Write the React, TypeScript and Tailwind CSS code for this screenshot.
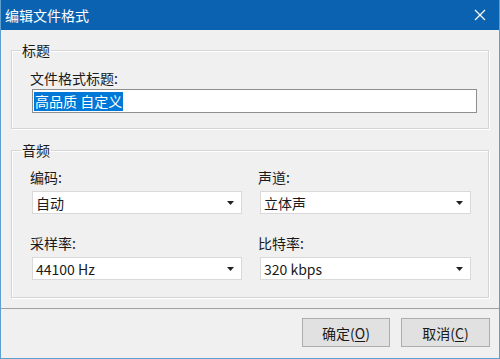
import React from "react";

const font = { fontFamily: '"Noto Sans CJK SC", "Noto Sans", sans-serif' };

function Arrow() {
  return (
    <svg width="7" height="4" viewBox="0 0 7 4" className="shrink-0">
      <polygon points="0,0 7,0 3.5,4" fill="#222" />
    </svg>
  );
}

function Select({ value, w }: { value: string; w: string }) {
  return (
    <div
      className={`${w} h-[23px] bg-white border border-[#d9d9d9] flex items-center justify-between pl-[3px] pr-[7px] text-[14px] leading-none text-[#1a1a1a]`}
    >
      <span style={font}>{value}</span>
      <Arrow />
    </div>
  );
}

export default function App() {
  return (
    <div
      className="w-[500px] h-[359px] bg-[#f0f0f0] border border-[#5d9fcf] border-t-0 flex flex-col overflow-hidden"
      style={font}
    >
      <div className="h-[30px] bg-[#0a62b0] flex items-center justify-between pl-[4px] pr-[13px] shrink-0">
        <span className="text-white text-[14px] leading-none">编辑文件格式</span>
        <svg width="12" height="12" viewBox="0 0 12 12">
          <path d="M1 1L11 11M11 1L1 11" stroke="#fff" strokeWidth="1.3" />
        </svg>
      </div>

      <div className="flex flex-col px-[10px] pt-[10px]">
        <fieldset className="border border-[#d5d5d5] shadow-[inset_1px_1px_0_#fff,1px_1px_0_#fff] w-[478px] h-[89px] pl-[20px] pr-[10px]">
          <legend className="px-[1px] ml-[-11px] text-[14px] leading-[20px] text-[#1a1a1a]">标题</legend>
          <div className="text-[14px] leading-[20px] text-[#1a1a1a] mt-[8px] -ml-[2px]">文件格式标题:</div>
          <div className="mt-[1px] h-[24px] w-[445px] bg-white border border-[#8f8f8f] flex items-center pl-[1px]">
            <span className="bg-[#0078d7] text-white text-[14px] leading-[19px] px-[1px]">高品质 自定义</span>
          </div>
        </fieldset>

        <fieldset className="mt-[11px] border border-[#d5d5d5] shadow-[inset_1px_1px_0_#fff,1px_1px_0_#fff] w-[478px] h-[158px] pl-[20px]">
          <legend className="px-[1px] ml-[-11px] text-[14px] leading-[20px] text-[#1a1a1a]">音频</legend>
          <div className="grid grid-cols-[228px_211px] mt-[7px] gap-y-[19px]">
            <div className="flex flex-col">
              <div className="text-[14px] leading-[20px] text-[#1a1a1a] -ml-[2px]">编码:</div>
              <div className="mt-[4px]"><Select value="自动" w="w-[210px]" /></div>
            </div>
            <div className="flex flex-col">
              <div className="text-[14px] leading-[20px] text-[#1a1a1a] -ml-[2px]">声道:</div>
              <div className="mt-[4px]"><Select value="立体声" w="w-[211px]" /></div>
            </div>
            <div className="flex flex-col">
              <div className="text-[14px] leading-[20px] text-[#1a1a1a] -ml-[2px]">采样率:</div>
              <div className="mt-[4px]"><Select value="44100 Hz" w="w-[210px]" /></div>
            </div>
            <div className="flex flex-col">
              <div className="text-[14px] leading-[20px] text-[#1a1a1a] -ml-[2px]">比特率:</div>
              <div className="mt-[4px]"><Select value="320 kbps" w="w-[211px]" /></div>
            </div>
          </div>
        </fieldset>
      </div>

      <div className="mt-[10px] h-[1px] bg-[#a0a0a0] shrink-0" />
      <div className="flex justify-end gap-[11px] pr-[9px] pt-[9px]">
        <button className="w-[88px] h-[29px] bg-[#e1e1e1] border border-[#adadad] text-[14px] leading-none text-[#1a1a1a] flex items-center justify-center">
          确定(<span className="underline underline-offset-2">O</span>)
        </button>
        <button className="w-[89px] h-[29px] bg-[#e1e1e1] border border-[#adadad] text-[14px] leading-none text-[#1a1a1a] flex items-center justify-center">
          取消(<span className="underline underline-offset-2">C</span>)
        </button>
      </div>
    </div>
  );
}
